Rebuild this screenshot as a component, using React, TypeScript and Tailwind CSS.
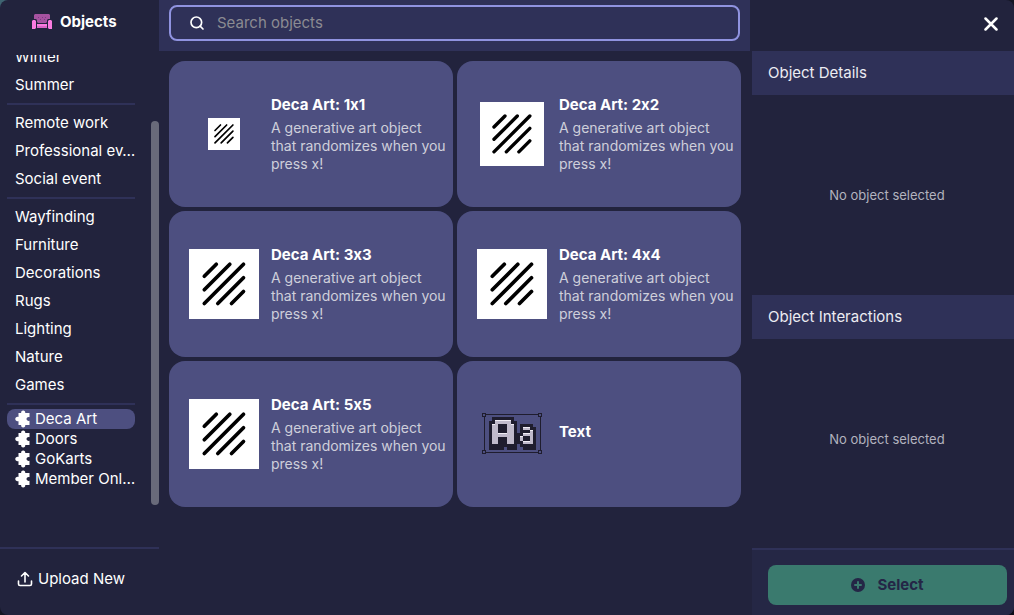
import { useId } from "react";
import { FiSearch } from "react-icons/fi";

type ArtItem = { name: string; description?: string; art: "small" | "medium" | "large" | "text" };

const blurb = "A generative art object that randomizes when you press x!";

const items: ArtItem[] = [
  { name: "Deca Art: 1x1", description: blurb, art: "small" },
  { name: "Deca Art: 2x2", description: blurb, art: "medium" },
  { name: "Deca Art: 3x3", description: blurb, art: "large" },
  { name: "Deca Art: 4x4", description: blurb, art: "large" },
  { name: "Deca Art: 5x5", description: blurb, art: "large" },
  { name: "Text", art: "text" },
];

const groups = [
  ["Winter", "Summer"],
  ["Remote work", "Professional ev…", "Social event"],
  ["Wayfinding", "Furniture", "Decorations", "Rugs", "Lighting", "Nature", "Games"],
];

const extensions = ["Deca Art", "Doors", "GoKarts", "Member Onl…"];

function Stripes({ className }: { className: string }) {
  return (
    <svg viewBox="0 0 70 70" className={className} aria-hidden="true">
      <rect width="70" height="70" fill="#fff" />
      <path
        d="M15.3 27.3 27.3 15.3M15.3 40.8 40.8 15.3M15.3 54.5 54.5 15.3M28.8 54.5 54.5 28.8M42.5 54.5 54.5 42.5"
        stroke="#000"
        strokeWidth="3.7"
        strokeLinecap="round"
      />
    </svg>
  );
}

function TextArt() {
  return (
    <svg viewBox="0 0 60 42" className="h-[42px] w-[60px]" shapeRendering="crispEdges" aria-hidden="true">
      <path d="M2.5 1.500h56v38h-56z" fill="none" stroke="#1f1d2e" />
      <g fill="#4d4f80" stroke="#1f1d2e">
        <path d="M.5.5h3v3h-3zM56.5.5h3v3h-3zM.5 37.5h3v3h-3zM56.5 37.5h3v3h-3z" />
      </g>
      <path
        d="M10 4h22v4h3v12h3v-9h13v3h3v23H41v-3h-3v-3h-3v6H25v-3h-3v3H7V8h3z"
        fill="#1f1d2e"
      />
      <path d="M13 7h16v4h3v20h-7v-7h-9v7h-6V11h3z" fill="#c0bacb" />
      <path d="M16 11h9v9h-9zM16 24h9v7h-9z" fill="#1f1d2e" />
      <path d="M13 7h16v1H13zM10 11h3v1h-3zM29 11h3v1h-3zM16 20h9v1h-9z" fill="#f1edf5" />
      <path d="M41 14h7v3h3v14H41v-3h-3v-5h3v-3h7v-3h-7z" fill="#c0bacb" />
      <path d="M41 23h7v5h-7z" fill="#1f1d2e" />
      <path d="M41 14h7v1h-7zM48 17h3v1h-3zM41 20h7v1h-7zM38 23h3v1h-3zM41 28h7v1h-7z" fill="#f1edf5" />
    </svg>
  );
}

function Couch() {
  return (
    <svg viewBox="0 0 20 16" className="h-4 w-5" aria-hidden="true">
      <path d="M3 0h14l1 1v4h-2l-1 1v2l-1 1H6L5 8V6L4 5H2V1z" fill="#a552a0" />
      <path d="M6 3h1v1H6zM10 3h1v1h-1zM13 3h1v1h-1zM8 5h1v1H8zM12 5h1v1h-1z" fill="#7b3a83" />
      <path d="M5 10h10v4H5z" fill="#fa7be0" />
      <path d="M5 12h10v2H5z" fill="#d964c6" />
      <path d="M1 6h2l1 1v7l-1 1H0V7zM17 6h2l1 1v8h-3l-1-1V7z" fill="#fa7be0" />
    </svg>
  );
}

function Puzzle() {
  return (
    <svg viewBox="0 0 16 18" className="h-[18px] w-4 shrink-0" fill="currentColor" aria-hidden="true">
      <path d="M4 3h2.200C5.800 1.600 6.800.5 8.200.5s2.400 1.100 2 2.500h4.300v4.200c-1.600-.4-3 .5-3 1.800s1.400 2.200 3 1.800V15h-4.300c.4 1.400-.6 2.500-2 2.500S5.800 16.400 6.200 15H3.500v-3.800C1.800 11.800.300 10.700.300 9.100s1.500-2.700 3.200-2.100V3z" />
    </svg>
  );
}

function Preview({ art }: { art: ArtItem["art"] }) {
  if (art === "small") return <Stripes className="size-8" />;
  if (art === "medium") return <Stripes className="size-16" />;
  if (art === "large") return <Stripes className="size-[70px]" />;
  return <TextArt />;
}

function ItemCard({ item }: { item: ArtItem }) {
  return (
    <button
      type="button"
      className="flex h-[146px] min-w-0 items-center gap-3 rounded-2xl bg-[#4d4f80] pl-5 pr-1 text-left"
    >
      <span className="flex w-[70px] shrink-0 justify-center">
        <Preview art={item.art} />
      </span>
      <span className="flex min-w-0 flex-1 flex-col">
        <span className="mb-1 text-[15px] font-bold leading-5 text-white">{item.name}</span>
        {item.description && (
          <span className="text-sm leading-[18px] text-[#cfcfdb]">{item.description}</span>
        )}
      </span>
    </button>
  );
}

function Sidebar() {
  return (
    <aside className="flex w-[159px] shrink-0 flex-col">
      <header className="flex h-[55px] shrink-0 items-start gap-2 pl-8 pt-3">
        <span className="flex h-5 items-center">
          <Couch />
        </span>
        <h1 className="text-[15px] font-bold leading-5">Objects</h1>
      </header>
      <div className="flex min-h-0 flex-1 overflow-hidden">
        <nav aria-label="Categories" className="-mt-3 ml-[7px] w-32 shrink-0">
          {groups.map((group) => (
            <ul key={group[0]} className="mb-1 border-b-2 border-[#2f3158] pb-1">
              {group.map((name) => (
                <li key={name}>
                  <button type="button" className="block w-full whitespace-nowrap pl-2 text-left text-[15px] leading-7">
                    {name}
                  </button>
                </li>
              ))}
            </ul>
          ))}
          <ul>
            {extensions.map((name, index) => (
              <li key={name}>
                <button
                  type="button"
                  aria-pressed={index === 0}
                  className="flex h-5 w-full items-center gap-1 whitespace-nowrap rounded-lg pl-2 text-left text-[15px] leading-5 aria-pressed:bg-[#4d4f80]"
                >
                  <Puzzle />
                  {name}
                </button>
              </li>
            ))}
          </ul>
        </nav>
        <div className="ml-auto flex w-2 flex-col pb-[42px] pt-[66px]" aria-hidden="true">
          <div className="flex-1 rounded-full bg-[#696a7a]" />
        </div>
      </div>
      <footer className="h-[68px] shrink-0 border-t-2 border-[#2f3158] pl-4 pt-5">
        <button type="button" className="flex items-center gap-1 text-[15px] leading-5">
          <svg viewBox="0 0 18 18" className="size-[18px]" fill="none" stroke="currentColor" strokeWidth="1.6" strokeLinecap="round" strokeLinejoin="round" aria-hidden="true">
            <path d="M9 12V3M5.5 6 9 2.5 12.500 6M2.500 11v3q0 1.500 1.500 1.500h10q1.500 0 1.500-1.500v-3" />
          </svg>
          Upload New
        </button>
      </footer>
    </aside>
  );
}

function Browser() {
  const searchId = useId();
  return (
    <main className="flex min-w-0 flex-1 flex-col">
      <div className="mr-0.5 h-[51px] bg-[#2f3158] px-2.5 pt-[5px]">
        <div className="flex h-9 items-center gap-3 rounded-lg border-2 border-[#9093e0] pl-[18px] pr-3">
          <label htmlFor={searchId} aria-label="Search objects">
            <FiSearch className="size-4" strokeWidth={2.5} aria-hidden="true" />
          </label>
          <input
            id={searchId}
            type="search"
            placeholder="Search objects"
            className="min-w-0 flex-1 bg-transparent text-[15px] leading-5 outline-none placeholder:text-[#8b8b92]"
          />
        </div>
      </div>
      <div className="grid grid-cols-2 gap-1 pb-4 pl-2.5 pr-[11px] pt-2.5">
        {items.map((item) => (
          <ItemCard key={item.name} item={item} />
        ))}
      </div>
    </main>
  );
}

function Section({ title }: { title: string }) {
  return (
    <section>
      <h2 className="bg-[#2f3158] px-4 py-3 text-[15px] leading-5 text-[#ececf2]">{title}</h2>
      <p className="flex h-[200px] items-center justify-center pl-2 text-[13px] leading-[18px] text-[#b3b3bf]">
        No object selected
      </p>
    </section>
  );
}

function Details() {
  return (
    <aside className="flex w-[262px] shrink-0 flex-col">
      <div className="flex h-[51px] shrink-0 items-center justify-end pb-1 pr-3">
        <button type="button" aria-label="Close" className="flex size-[22px] items-center justify-center">
          <svg viewBox="0 0 14 14" className="size-3.5" stroke="#fff" strokeWidth="2.500" strokeLinecap="round" aria-hidden="true">
            <path d="m1.500 1.500 11 11M12.500 1.500l-11 11" />
          </svg>
        </button>
      </div>
      <div className="min-h-0 flex-1 overflow-hidden">
        <Section title="Object Details" />
        <Section title="Object Interactions" />
      </div>
      <footer className="h-[67px] shrink-0 border-t-2 border-[#2f3158] bg-[#252745] pl-4 pr-[7px] pt-[15px]">
        <button
          type="button"
          className="flex h-10 w-full items-center justify-center gap-3 rounded-lg bg-[#3a7a6e] text-[15px] font-bold text-[#242646]"
        >
          <svg viewBox="0 0 14 14" className="size-3.5" aria-hidden="true">
            <circle cx="7" cy="7" r="7" fill="currentColor" />
            <path d="M7 4v6M4 7h6" stroke="#3a7a6e" strokeWidth="2" strokeLinecap="round" />
          </svg>
          Select
        </button>
      </footer>
    </aside>
  );
}

export default function App() {
  return (
    <div className="h-screen bg-[linear-gradient(to_bottom_right,#3f6472,#141624_30%,#141624_70%,#0c0d18)] font-['Inter',sans-serif] text-white [font-feature-settings:'calt'_0]">
      <div className="flex h-full overflow-hidden rounded-lg bg-[#22233d]">
        <Sidebar />
        <Browser />
        <Details />
      </div>
    </div>
  );
}
